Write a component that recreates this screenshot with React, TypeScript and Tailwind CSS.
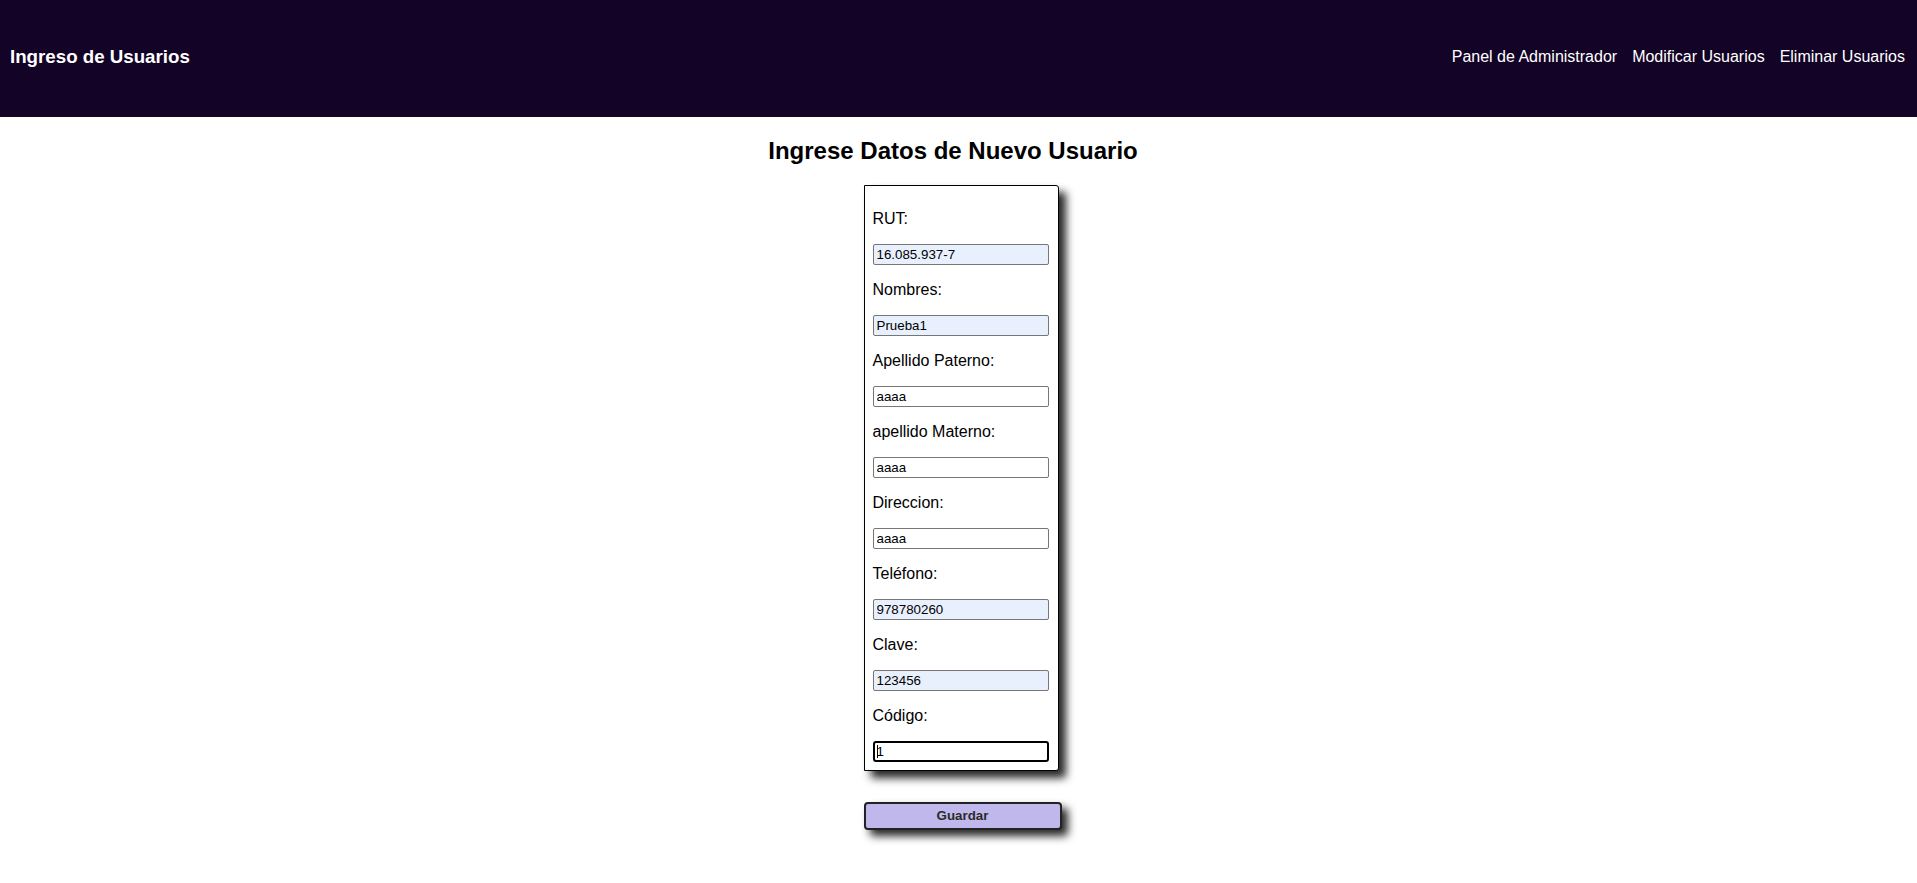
import React from "react";

type Field = { label: string; value: string; autofill: boolean };

const fields: Field[] = [
  { label: "RUT:", value: "16.085.937-7", autofill: true },
  { label: "Nombres:", value: "Prueba1", autofill: true },
  { label: "Apellido Paterno:", value: "aaaa", autofill: false },
  { label: "apellido Materno:", value: "aaaa", autofill: false },
  { label: "Direccion:", value: "aaaa", autofill: false },
  { label: "Teléfono:", value: "978780260", autofill: true },
  { label: "Clave:", value: "123456", autofill: true },
];

export default function App() {
  return (
    <div className="min-h-screen bg-white text-black font-['Liberation_Sans',Arial,sans-serif]">
      <header className="h-[117px] bg-[#130326] flex items-center justify-between pl-[10px] pr-[12px] pb-[3px]">
        <h3 className="text-[18.72px] leading-[21.5px] font-bold text-white">Ingreso de Usuarios</h3>
        <nav className="flex gap-[15px] text-[16px] leading-[18.4px] text-white">
          <a href="#">Panel de Administrador</a>
          <a href="#">Modificar Usuarios</a>
          <a href="#">Eliminar Usuarios</a>
        </nav>
      </header>

      <h2 className="mt-[20px] pr-[11px] text-center text-[24px] leading-[27.6px] font-bold">
        Ingrese Datos de Nuevo Usuario
      </h2>

      <div className="mt-[20px] mx-auto w-[208px] pl-[9px]">
        <form
          className="w-[195px] border border-black rounded-tr-[3px] rounded-br-[3px] bg-white px-[8px] pt-[24px] pb-[8px] shadow-[7px_7px_9px_rgba(0,0,0,0.85)]"
          onSubmit={(e) => e.preventDefault()}
        >
          {fields.map((f) => (
            <div key={f.label}>
              <label className="block text-[16px] leading-[18px]">{f.label}</label>
              <input
                readOnly
                value={f.value}
                className={`mt-[16px] mb-[16px] block w-[176px] h-[21px] border border-[#767676] rounded-[2px] px-[3px] text-[13.33px] leading-[15px] text-black outline-none ${
                  f.autofill ? "bg-[#e8f0fe]" : "bg-white"
                }`}
              />
            </div>
          ))}
          <div>
            <label className="block text-[16px] leading-[18px]">Código:</label>
            <div className="relative mt-[16px]">
              <input
                readOnly
                value="1"
                className="block w-[176px] h-[21px] border-2 border-black rounded-[3px] px-[2px] text-[13.33px] leading-[15px] text-black bg-white outline-none"
              />
              <span className="absolute left-[4px] top-[4px] h-[13px] w-px bg-black" />
            </div>
          </div>
        </form>

        <button
          type="button"
          className="mt-[31px] block w-[198px] h-[28px] rounded-[4px] border-2 border-[#222] bg-[#c0b8ec] text-[13.33px] font-bold text-[#2a2a2a] shadow-[6px_6px_8px_rgba(0,0,0,0.85)]"
        >
          Guardar
        </button>
      </div>
    </div>
  );
}
